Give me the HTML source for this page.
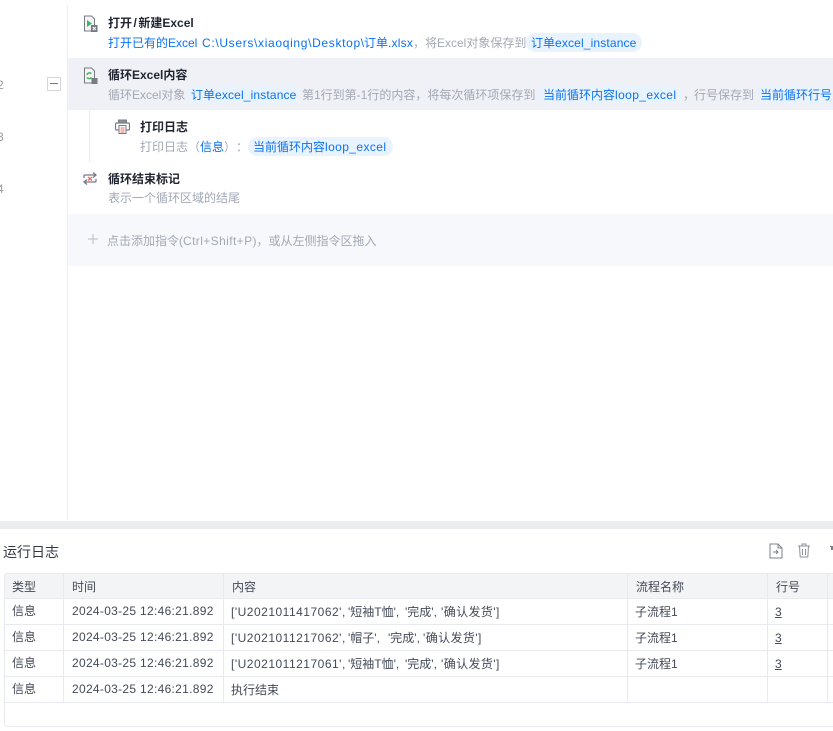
<!DOCTYPE html>
<html><head><meta charset="utf-8">
<style>
html,body{margin:0;padding:0;background:#fff;}
body{width:833px;height:731px;position:relative;overflow:hidden;font-family:"Liberation Sans","Noto Sans CJK SC",sans-serif;font-size:12px;color:#4a4f5c;text-spacing-trim:space-all;}
.a{position:absolute;white-space:nowrap;line-height:16px;}
.t{font-weight:bold;color:#1f2430;font-size:12px;}
.d{color:#a3a8b5;font-size:12px;}
.b{color:#0a72f0;}
.p{position:absolute;white-space:nowrap;color:#0a72f0;background:#e9f3fe;border-radius:10px;height:19px;line-height:20px;font-size:12px;overflow:hidden;box-sizing:border-box;}
.ln{position:absolute;background:#e8eaef;}
.c{position:absolute;white-space:nowrap;line-height:16px;font-size:12px;color:#444a57;}
.dt{letter-spacing:.3px;}
.id{letter-spacing:.5px;}
.l1{letter-spacing:.15px;}
.l2{letter-spacing:.4px;}
svg{position:absolute;}
</style></head><body>
<div class="ln" style="left:67px;top:5px;width:1px;height:515px;background:#eeeff3"></div>
<div class="a" style="left:68px;top:58px;width:765px;height:52px;background:#eff1f6"></div>
<div class="a" style="left:68px;top:214px;width:765px;height:52px;background:#f7f8fc"></div>
<div class="ln" style="left:89px;top:110px;width:1px;height:52px"></div>
<div class="a" style="left:-3px;top:77px;color:#999">2</div>
<div class="a" style="left:-3px;top:129px;color:#999">3</div>
<div class="a" style="left:-3px;top:181px;color:#999">4</div>
<div class="a" style="left:47px;top:77px;width:12px;height:12px;border:1px solid #d4d6dc;background:#fff"></div>
<div class="a" style="left:50px;top:83px;width:8px;height:1px;background:#777"></div>

<svg style="left:84px;top:15px" width="14" height="17" viewBox="0 0 14 17"><path d="M.5 1h7l3 3v12H.5z" fill="#f4f4f5" stroke="#777b85"/><path d="M3 5l5 3.500L3 12z" fill="#3fb56b"/><rect x="7" y="10" width="6.500" height="7" fill="#777b85"/><path d="M8.800 12l3 3m0-3l-3 3" stroke="#fff"/></svg>
<div class="a t" style="left:108px;top:15px">打开<span style="margin:0 1.500px">/</span>新建Excel</div>
<div class="a b" style="left:108px;top:35px">打开已有的Excel</div>
<div class="a b" style="left:202px;top:35px;letter-spacing:.67px">C:\Users\xiaoqing\Desktop\</div>
<div class="a b" style="left:364px;top:35px">订单<span style="letter-spacing:.2px">.xlsx</span></div>
<div class="a d" style="left:413px;top:35px">，将Excel对象保存到</div>
<div class="p" style="left:526px;top:33px;width:116px;padding-left:5px">订单<span class="l1">excel_instance</span></div>

<svg style="left:84px;top:67px" width="14" height="17" viewBox="0 0 14 17"><path d="M.5 1h7l3 3v12H.5z" fill="#f4f4f5" stroke="#777b85"/><path d="M7.500 6.500A2.800 2.800 0 0 0 3 8M3 10.500A2.800 2.800 0 0 0 7.500 10.500" fill="none" stroke="#45b85c" stroke-width="1.500"/><rect x="7.500" y="11" width="6" height="6" fill="#777b85"/></svg>
<div class="a t" style="left:108px;top:67px">循环Excel内容</div>
<div class="a d" style="left:108px;top:87px">循环Excel对象</div>
<div class="p" style="left:187px;top:85px;width:112px;padding-left:4px">订单<span class="l1">excel_instance</span></div>
<div class="a d" style="left:302px;top:87px">第1行到第-1行的内容，将每次循环项保存到</div>
<div class="p" style="left:540px;top:85px;width:141px;padding-left:3px">当前循环内容<span class="l2">loop_excel</span></div>
<div class="a d" style="left:683px;top:87px">，</div>
<div class="a d" style="left:694px;top:87px">行号保存到</div>
<div class="p" style="left:757px;top:85px;width:90px;padding-left:3px">当前循环行号</div>

<svg style="left:115px;top:119px" width="15" height="15" viewBox="0 0 15 15"><path d="M3.500 4V1h8v3" fill="#8d9099" stroke="#777b85"/><path d="M3.500 11H1.500a1 1 0 0 1-1-1V5a1 1 0 0 1 1-1h12a1 1 0 0 1 1 1v5a1 1 0 0 1-1 1h-2" fill="#fff" stroke="#777b85" stroke-width="1.200"/><rect x="4" y="6.500" width="7" height="8" fill="#fff" stroke="#777b85"/><path d="M5.500 9h4M5.500 11h4M5.500 13h4" stroke="#ef6a6a"/></svg>
<div class="a t" style="left:140px;top:119px">打印日志</div>
<div class="a d" style="left:140px;top:139px">打印日志（<span class="b">信息</span>）：</div>
<div class="p" style="left:248px;top:137px;width:145px;padding-left:5px">当前循环内容<span class="l2">loop_excel</span></div>

<svg style="left:82px;top:171px" width="16" height="15" viewBox="0 0 16 15"><path d="M2 7V5a1 1 0 0 1 1-1h10M11 1.500L14 4l-3 2.500" fill="none" stroke="#777b85" stroke-width="1.300"/><path d="M14 8v2a1 1 0 0 1-1 1H3M5 8.500L2 11l3 2.500" fill="none" stroke="#777b85" stroke-width="1.300"/><path d="M6 6l4 3.500m0-3.500l-4 3.500" stroke="#ee6a6a" stroke-width="1.300"/></svg>
<div class="a t" style="left:108px;top:171px">循环结束标记</div>
<div class="a d" style="left:108px;top:190px">表示一个循环区域的结尾</div>

<svg style="left:87px;top:233px" width="12" height="12" viewBox="0 0 12 12"><path d="M6 1v10M1 6h10" stroke="#b6bac4"/></svg>
<div class="a d" style="left:107px;top:233px">点击添加指令(<span class="l2">Ctrl+Shift+P</span>)，或从左侧指令区拖入</div>

<div class="a" style="left:0;top:521px;width:833px;height:8px;background:#ebecf0"></div>
<div class="a" style="left:3px;top:543px;font-size:14px;line-height:18px;color:#333844">运行日志</div>
<svg style="left:769px;top:543px" width="14" height="16" viewBox="0 0 14 16"><path d="M1 1h8l4 4v10H1z" fill="none" stroke="#7b808c"/><path d="M9 1v4h4M4 9h5M7 7l2 2-2 2" fill="none" stroke="#7b808c"/></svg>
<svg style="left:797px;top:543px" width="14" height="15" viewBox="0 0 14 15"><path d="M1 3h12M5 3V1h4v2M2.500 3l.7 11h7.600l.7-11M5.500 6v6M8.500 6v6" fill="none" stroke="#8b909b"/></svg>
<svg style="left:830px;top:546px" width="3" height="6"><rect width="3" height="1" fill="#7b808c"/><rect x="1" y="1" width="2" height="3" fill="#7b808c"/></svg>

<div class="a" style="left:4px;top:573px;width:840px;height:154px;border:1px solid #e8eaef;border-radius:3px;box-sizing:border-box"></div>
<div class="a" style="left:5px;top:574px;width:828px;height:24px;background:#f3f4f6"></div>
<div class="ln" style="left:4px;top:598px;width:829px;height:1px"></div>
<div class="ln" style="left:4px;top:624px;width:829px;height:1px"></div>
<div class="ln" style="left:4px;top:650px;width:829px;height:1px"></div>
<div class="ln" style="left:4px;top:676px;width:829px;height:1px"></div>
<div class="ln" style="left:4px;top:702px;width:829px;height:1px"></div>
<div class="ln" style="left:63px;top:574px;width:1px;height:128px"></div>
<div class="ln" style="left:223px;top:574px;width:1px;height:128px"></div>
<div class="ln" style="left:627px;top:574px;width:1px;height:128px"></div>
<div class="ln" style="left:767px;top:574px;width:1px;height:128px"></div>
<div class="ln" style="left:827px;top:574px;width:1px;height:128px"></div>

<div class="c" style="left:12px;top:579px">类型</div>
<div class="c" style="left:72px;top:579px">时间</div>
<div class="c" style="left:232px;top:579px">内容</div>
<div class="c" style="left:636px;top:579px">流程名称</div>
<div class="c" style="left:776px;top:579px">行号</div>

<div class="c" style="left:12px;top:603px">信息</div>
<div class="c dt" style="left:72px;top:603px">2024-03-25 12:46:21.892</div>
<div class="c id" style="left:231px;top:604px">['U2021011417062',</div>
<div class="c" style="left:348px;top:604px">'短袖T恤',</div>
<div class="c" style="left:405px;top:604px">'完成',</div>
<div class="c l2" style="left:441px;top:604px">'确认发货']</div>
<div class="c" style="left:635px;top:604px">子流程1</div>
<div class="c" style="left:775px;top:604px;text-decoration:underline">3</div>

<div class="c" style="left:12px;top:629px">信息</div>
<div class="c dt" style="left:72px;top:629px">2024-03-25 12:46:21.892</div>
<div class="c id" style="left:231px;top:630px">['U2021011217062',</div>
<div class="c" style="left:348px;top:630px">'帽子',</div>
<div class="c" style="left:388px;top:630px">'完成',</div>
<div class="c l2" style="left:423px;top:630px">'确认发货']</div>
<div class="c" style="left:635px;top:630px">子流程1</div>
<div class="c" style="left:775px;top:630px;text-decoration:underline">3</div>

<div class="c" style="left:12px;top:655px">信息</div>
<div class="c dt" style="left:72px;top:655px">2024-03-25 12:46:21.892</div>
<div class="c id" style="left:231px;top:656px">['U2021011217061',</div>
<div class="c" style="left:348px;top:656px">'短袖T恤',</div>
<div class="c" style="left:405px;top:656px">'完成',</div>
<div class="c l2" style="left:441px;top:656px">'确认发货']</div>
<div class="c" style="left:635px;top:656px">子流程1</div>
<div class="c" style="left:775px;top:656px;text-decoration:underline">3</div>

<div class="c" style="left:12px;top:681px">信息</div>
<div class="c dt" style="left:72px;top:681px">2024-03-25 12:46:21.892</div>
<div class="c" style="left:231px;top:682px">执行结束</div>
</body></html>
